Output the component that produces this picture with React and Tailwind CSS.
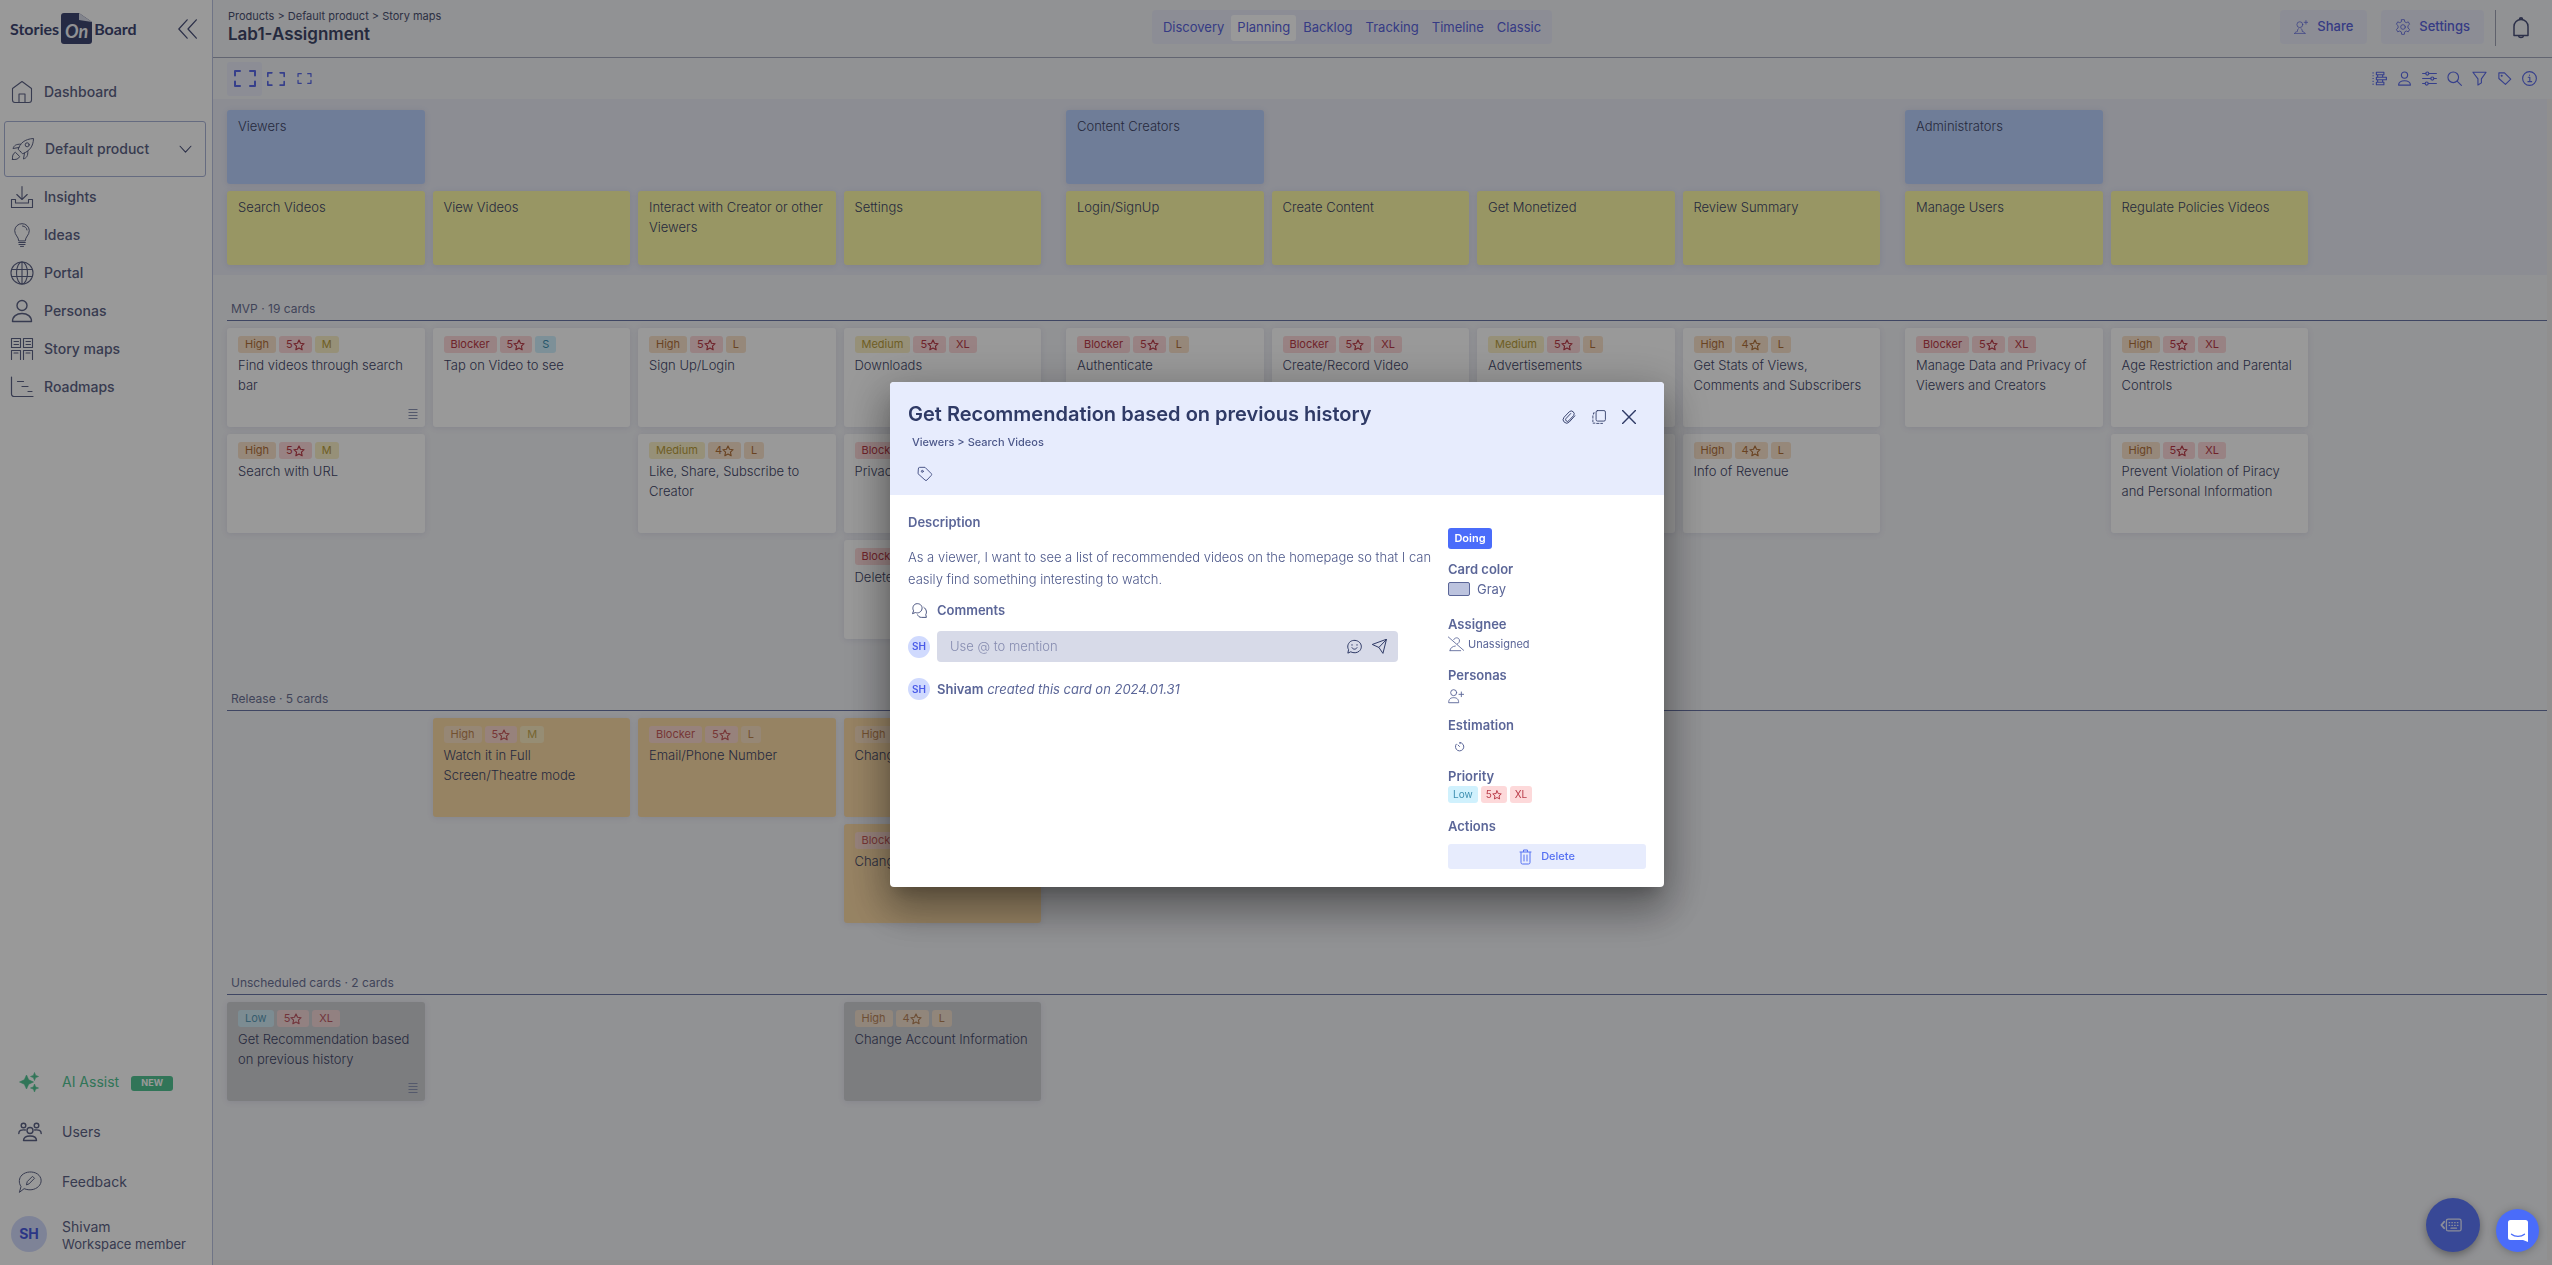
import React from "react";

function Icon({ size = 20, w, h, sw = 1.2, box = "0 0 24 24", className = "", children }) {
  return (
    <svg
      width={w || size}
      height={h || size}
      viewBox={box}
      fill="none"
      stroke="currentColor"
      strokeWidth={sw}
      strokeLinecap="round"
      strokeLinejoin="round"
      className={"shrink-0 " + className}
      aria-hidden="true"
    >
      {children}
    </svg>
  );
}

const HomeIcon = () => (
  <Icon size={24} sw={1.1}>
    <path d="M2.500 8.500 12 1.500l9.500 7V20a2.500 2.500 0 0 1-2.500 2.500H5A2.500 2.500 0 0 1 2.500 20z" />
    <path d="M9 22.500V14h6v8.500" />
  </Icon>
);
const RocketIcon = () => (
  <Icon size={24} sw={1}>
    <path d="M9.500 14.500c-1-.6-1.800-1.300-2.300-2.300C9 6.500 13.500 2 22.500 1.500 22.300 9.500 18.500 14 11.800 16.700c-1-.4-1.800-1.200-2.300-2.200z" />
    <circle cx="16.200" cy="7.800" r="2" />
    <path d="M8 10.500 2 11.500C3 8.500 5 7 9.800 7.200M13.500 16l-1 6c3-1 4.600-3 4.300-7.800" />
    <path d="M1.500 22.500c-.3-3.600.4-6 2.900-7.200l4.300 4.200c-1.200 2.600-3.500 3.300-7.200 3z" />
  </Icon>
);
const InsightsIcon = () => (
  <Icon size={24} sw={1.1}>
    <path d="M12 1.500v13M6.800 9.500l5.200 5 5.200-5" />
    <path d="M1.500 14.500h4v3.500h13v-3.500h4V22.500h-21z" />
  </Icon>
);
const IdeaIcon = () => (
  <Icon size={24} sw={1}>
    <path d="M8.700 17.500c0-3.800-4-5.200-4-10A7.200 7.200 0 0 1 12 .700a7.200 7.200 0 0 1 7.300 6.800c0 4.800-4 6.200-4 10z" />
    <path d="M12.500 3c2.500.2 4.200 1.800 4.500 4M8.700 19.500h6.600M9 21.500h6M10.500 23.400h3" />
  </Icon>
);
const GlobeIcon = () => (
  <Icon size={24} sw={1.1}>
    <circle cx="12" cy="12" r="11" />
    <ellipse cx="12" cy="12" rx="5.500" ry="11" />
    <path d="M1.800 8.500h20.400M1.800 15.500h20.400M12 1v22" />
  </Icon>
);
const PersonIcon = ({ size = 24, sw = 1.4 }) => (
  <Icon size={size} sw={sw}>
    <circle cx="12" cy="6.500" r="5" />
    <path d="M2.500 22.500c0-5 4-8 9.500-8s9.500 3 9.500 8z" />
  </Icon>
);
const MapsIcon = () => (
  <Icon size={24} sw={1.1}>
    <path d="M1.500 1.500h9v9h-9zM13.500 1.500h9v9h-9zM1.500 22.500v-9h9v9M13.500 22.500v-9h9v9" />
    <path d="M4 4.500h4.500M4 7.500h4.500M16 4.500h4.500M16 7.500h4.500M4 16h4M16 16h4" />
  </Icon>
);
const RoadmapIcon = () => (
  <Icon size={24} sw={1.200}>
    <path d="M1.500 2v17a2.500 2.500 0 0 0 2.500 2.500h19M7.500 6.500h6M12 11.500h6M18 16.500h4" />
  </Icon>
);
const SparkIcon = () => (
  <svg width="20" height="20" viewBox="0 0 20 20" fill="currentColor" className="shrink-0" aria-hidden="true">
    <path d="M7.500 3 9.700 7.800 14.500 10l-4.800 2.200L7.500 17l-2.200-4.800L.5 10l4.800-2.200zM15.500.5l1.100 2.900 2.900 1.100-2.900 1.100-1.100 2.900-1.100-2.900-2.900-1.100 2.900-1.100zM15.500 12l1.100 2.900 2.900 1.100-2.900 1.100-1.100 2.900-1.100-2.900-2.900-1.100 2.900-1.100z" stroke="currentColor" strokeWidth=".6" />
  </svg>
);
const UsersIcon = () => (
  <Icon size={24} sw={1.400}>
    <circle cx="12" cy="10.500" r="3" />
    <circle cx="5.500" cy="5.500" r="2.300" />
    <circle cx="18.500" cy="5.500" r="2.300" />
    <path d="M5.500 20.500c0-3 2.500-4.500 6.500-4.500s6.500 1.500 6.500 4.500zM.8 13.500c0-3 2.200-4 6.500-3.500M23.200 13.500c0-3-2.200-4-6.500-3.500" />
  </Icon>
);
const FeedbackIcon = () => (
  <Icon size={24} sw={1}>
    <path d="M1.500 22 3 16.500C.5 13 .8 8 4 5c4-3.700 11-4 15.500-1 4.500 3.200 4.800 9 1 12.500-3.600 3.400-9 4.300-14 2.300z" />
    <path d="m8.500 14.500.8-3 5.200-5.200 2 2-5.200 5.300z" />
  </Icon>
);

const NAV = [
  ["Insights", InsightsIcon],
  ["Ideas", IdeaIcon],
  ["Portal", GlobeIcon],
  ["Personas", PersonIcon],
  ["Story maps", MapsIcon],
  ["Roadmaps", RoadmapIcon],
];

function Logo() {
  return (
    <div className="flex h-[31px] items-center gap-[2px] font-['Liberation_Sans_Narrow',Lato,sans-serif] text-base font-bold text-[#3f4672]">
      <span>Stories</span>
      <span className="relative flex h-[31px] w-[31px] items-center justify-center rounded-[3px] bg-[#3f4672] pt-1 text-lg italic text-[#f2f3f8]">
        On
        <svg width="13" height="9" viewBox="0 0 13 9" className="absolute right-0 top-0" aria-hidden="true">
          <path d="M0 0h13v9z" fill="#fff" />
          <path d="M0 0v7l13 2z" fill="#d9dcea" />
        </svg>
      </span>
      <span>Board</span>
    </div>
  );
}

function Sidebar() {
  return (
    <aside className="flex w-[213px] shrink-0 flex-col border-r border-[#b9c2e0] bg-white text-[#5d6385]">
      <div className="flex h-[57px] items-center justify-between pl-[10px] pr-[14px]">
        <Logo />
        <button type="button" aria-label="Collapse sidebar" className="text-[#4a517a]">
          <Icon size={20} sw={1.500}>
            <path d="M11 1 1 12l10 11M22 1 12 12l10 11" />
          </Icon>
        </button>
      </div>
      <a href="#dashboard" className="mt-[17px] flex h-9 items-center gap-[10px] pl-[10px] text-sm font-medium">
        <HomeIcon />
        Dashboard
      </a>
      <button type="button" className="ml-1 mr-[6px] mt-[11px] flex h-14 items-center gap-[10px] rounded-[3px] border border-[#a9b3d6] pl-[6px] pr-[13px] text-sm font-medium">
        <RocketIcon />
        Default product
        <Icon size={13} sw={2} className="ml-auto text-[#4a517a]">
          <path d="m2 6 10 11L22 6" />
        </Icon>
      </button>
      <nav className="mt-px flex flex-col">
        {NAV.map(([label, Glyph]) => (
          <a key={label} href={"#" + label.replace(" ", "-")} className="flex h-[38px] items-center gap-[10px] pl-[10px] text-sm font-medium">
            <Glyph />
            {label}
          </a>
        ))}
      </nav>
      <div className="mt-auto flex flex-col pb-1">
        <a href="#assist" className="flex h-[50px] items-center pl-[19px] text-sm text-[#52c493]">
          <SparkIcon />
          <span className="ml-[23px]">AI Assist</span>
          <span className="ml-3 mt-[3px] flex h-[15px] w-[42px] items-center justify-center rounded-[3px] bg-[#52c493] text-[9px] font-bold text-white">NEW</span>
        </a>
        <a href="#users" className="flex h-[50px] items-center gap-[20px] pl-[18px] text-sm">
          <UsersIcon />
          Users
        </a>
        <a href="#feedback" className="flex h-[50px] items-center gap-[20px] pl-[18px] text-sm">
          <FeedbackIcon />
          Feedback
        </a>
        <div className="flex h-[54px] items-center gap-[15px] pl-[11px]">
          <span className="flex h-9 w-9 items-center justify-center rounded-full bg-[#d3dbfc] text-sm font-bold text-[#4a5be0]">SH</span>
          <span className="flex flex-col pt-px">
            <span className="text-sm leading-[18px]">Shivam</span>
            <span className="text-[13px] leading-4">Workspace member</span>
          </span>
        </div>
      </div>
    </aside>
  );
}

const TABS = ["Discovery", "Planning", "Backlog", "Tracking", "Timeline", "Classic"];

function Header() {
  return (
    <header className="flex h-[58px] shrink-0 items-start border-b border-[#a4a9bd] pt-[10px]">
      <div className="flex flex-1 flex-col pl-[7px] text-[#4a5070]">
        <span className="-mt-[2px] ml-2 text-[11px] leading-4">Products &gt; Default product &gt; Story maps</span>
        <h1 className="ml-2 text-[17px] font-semibold leading-5 text-[#3f4668]">Lab1-Assignment</h1>
      </div>
      <div className="flex h-[34px] items-start gap-px rounded-[4px] bg-[#e9ecf9] px-[5px] pt-[5px]">
        {TABS.map((t) => (
          <button
            key={t}
            type="button"
            className={
              "h-[26px] rounded-[3px] px-[6px] pb-[3px] text-[13px] leading-5 text-[#5a63dd] " + (t === "Planning" ? "bg-white" : "")
            }
          >
            {t}
          </button>
        ))}
      </div>
      <div className="flex flex-1 justify-end gap-[14px]">
        <button type="button" className="flex h-[34px] items-center gap-[9px] rounded-[4px] bg-[#e9ecf9] px-[14px] text-[13px] font-medium text-[#5a63dd]">
          <Icon size={14} sw={1.200}>
            <circle cx="10" cy="8" r="5" />
            <path d="M1 23c1-2 2-2.500 5-3.500v-3l2-1.500M19 23c-1-2-2-2.500-5-3.500v-3L12 15M1 23h18M20.500 1v6M17.500 4h6" />
          </Icon>
          Share
        </button>
        <button type="button" className="flex h-[34px] items-center gap-2 rounded-[4px] bg-[#e9ecf9] px-[14px] text-[13px] font-medium text-[#5a63dd]">
          <Icon size={16} sw={1.200}>
            <circle cx="12" cy="12" r="3.500" />
            <path d="M10 1h4l.6 3.200 2.300 1.300 3-1.200 2 3.500-2.500 2.200v3.500l2.500 2.200-2 3.500-3-1.200-2.300 1.300L14 23h-4l-.6-3.700-2.300-1.300-3 1.200-2-3.500 2.500-2.200v-3.500L2.100 7.800l2-3.500 3 1.200 2.300-1.300z" />
          </Icon>
          Settings
        </button>
      </div>
      <div className="flex w-[68px] shrink-0 items-center">
        <span className="ml-[11px] h-9 w-px bg-[#9ea2b5]" />
        <button type="button" aria-label="Notifications" className="ml-[17px] text-[#4a517a]">
          <Icon w={16} h={22} sw={1.500} box="0 0 16 22">
            <path d="M1 18.500V9.500a7 7 0 0 1 14 0v9zM6.500 2.300a1.500 1.500 0 0 1 3 0M5.500 18.800c.5 2.400 4.500 2.400 5 0" />
          </Icon>
        </button>
      </div>
    </header>
  );
}

function Corners({ w, h, sw }) {
  return (
    <Icon w={w} h={h} sw={sw} box="0 0 22 17">
      <path d="M1 5.500V1h5M16 1h5v4.500M21 11.500V16h-5M6 16H1v-4.500" />
    </Icon>
  );
}

const TOOLS = [
  ["Card list", <path key="a" d="M1.500 3h.5M1.500 12h.5M1.500 21h.5M1.500 7.500h.5M1.500 16.500h.5M7 2h12v4H7zM7 18h12v4H7zM7 10h16v4H7zM9 6v4M17 6v4M9 14v4M17 14v4" />],
  ["Personas", <g key="b"><circle cx="12" cy="6.500" r="5" /><path d="M2.500 22.500c0-4 4-7 9.500-7s9.500 3 9.500 7z" /></g>],
  ["Options", <g key="c"><path d="M1 4h5M11 4h12M1 12h13M19 12h4M1 20h4M10 20h13" /><circle cx="8.500" cy="4" r="2.500" /><circle cx="16.500" cy="12" r="2.500" /><circle cx="7.500" cy="20" r="2.500" /></g>],
  ["Search", <g key="d"><circle cx="10" cy="10" r="8.500" /><path d="m16.500 16.500 6.500 6.500" /></g>],
  ["Filter", <path key="e" d="M1.500 2h21L15 12.500V19l-5.500 3.500v-10z" />],
  ["Labels", <g key="f"><path d="M3 3h9l10 10-8.500 8.500L3 12z" /><circle cx="7.500" cy="7.500" r=".8" /></g>],
  ["Info", <g key="g"><circle cx="12" cy="12" r="11" /><path d="M10 10h2.500v7M9.500 17h6M12 6.300v.400" /></g>],
];

function Toolbar() {
  return (
    <div className="flex h-[41px] shrink-0 items-center pl-[14px] pr-[15px] text-[#5a6ae8]">
      <button type="button" aria-label="Large cards" className="flex h-[34px] w-[35px] items-center justify-center rounded-[3px] bg-[#e9ecf9]">
        <Corners w={22} h={17} sw={2} />
      </button>
      <button type="button" aria-label="Medium cards" className="ml-[5px]">
        <Corners w={18} h={14} sw={2} />
      </button>
      <button type="button" aria-label="Small cards" className="ml-3">
        <Corners w={15} h={11} sw={2} />
      </button>
      <div className="ml-auto flex gap-[10px]">
        {TOOLS.map(([label, art]) => (
          <button key={label} type="button" aria-label={label}>
            <Icon size={15} sw={1.800}>{art}</Icon>
          </button>
        ))}
      </div>
    </div>
  );
}

const TONES = {
  red: "bg-[#fdd9da] text-[#b93a47]",
  orange: "bg-[#fbe3cc] text-[#b0703a]",
  yellow: "bg-[#fbf0c8] text-[#b89d3c]",
  blue: "bg-[#d0f1fd] text-[#3e8fb0]",
};
const LABELS = {
  Blocker: "red", High: "orange", Medium: "yellow", Low: "blue",
  "5": "red", "4": "orange", XL: "red", L: "orange", M: "yellow", S: "blue",
};

function Badge({ label, small, faded }) {
  const star = label === "5" || label === "4";
  return (
    <span
      className={
        "flex h-[17px] items-center rounded-[3px] " +
        (small ? "px-[5px] text-[10px] " : "px-[7px] text-[11px] ") +
        (faded ? "opacity-80 " : "") +
        TONES[LABELS[label]]
      }
    >
      {label}
      {star && (
        <Icon size={small ? 10 : 12} sw={2.300}>
          <path d="m12 2 3 6.600 7.200.8-5.300 4.900 1.400 7.200L12 18l-6.300 3.500 1.400-7.200L1.800 9.400 9 8.600z" />
        </Icon>
      )}
    </span>
  );
}

const SHADOW = "shadow-[0_1px_6px_rgba(80,85,150,0.12)]";

function Card({ data }) {
  const [tags, title, tone, note] = data;
  const bg = tone === "amber" ? "bg-[#fbdaa6]" : tone === "gray" ? "bg-[#cfd0d4]" : "bg-white";
  return (
    <article className={"relative h-[99px] rounded-[3px] px-[11px] pt-2 " + bg + " " + SHADOW}>
      <div className="flex gap-[3px]">
        {tags.map((t) => (
          <Badge key={t} label={t} faded={Boolean(tone)} />
        ))}
      </div>
      <p className="mt-[2px] text-[13px] font-light leading-5 text-[#3f4668]">{title}</p>
      {note && (
        <Icon w={10} h={10} sw={1} box="0 0 10 10" className="absolute bottom-2 right-[7px] text-[#8d94b5]">
          <path d="M.5 .5h9M.5 3.500h9M.5 6.500h9M.5 9.500h9" strokeLinecap="butt" />
        </Icon>
      )}
    </article>
  );
}

function Groups({ cells, render }) {
  const parts = [cells.slice(0, 4), cells.slice(4, 8), cells.slice(8, 10)];
  return (
    <div className="flex gap-[25px] pl-[14px]">
      {parts.map((p, i) => (
        <div key={i} className={"grid items-start gap-x-2 " + (i === 2 ? "w-[403px] grid-cols-2" : "w-[814px] grid-cols-4")}>
          {p.map((c, j) => (
            <div key={j} className="min-w-0">{render(c)}</div>
          ))}
        </div>
      ))}
    </div>
  );
}

const ACTIVITIES = ["Viewers", "", "", "", "Content Creators", "", "", "", "Administrators", ""];
const STEPS = ["Search Videos", "View Videos", "Interact with Creator or other Viewers", "Settings", "Login/SignUp", "Create Content", "Get Monetized", "Review Summary", "Manage Users", "Regulate Policies Videos"];

const RELEASES = [
  {
    name: "MVP", count: 19,
    columns: [
      [[["High", "5", "M"], "Find videos through search bar", "", true], [["High", "5", "M"], "Search with URL"]],
      [[["Blocker", "5", "S"], "Tap on Video to see"]],
      [[["High", "5", "L"], "Sign Up/Login"], [["Medium", "4", "L"], "Like, Share, Subscribe to Creator"]],
      [[["Medium", "5", "XL"], "Downloads"], [["Blocker"], "Privacy"], [["Blocker"], "Delete"]],
      [[["Blocker", "5", "L"], "Authenticate"]],
      [[["Blocker", "5", "XL"], "Create/Record Video"]],
      [[["Medium", "5", "L"], "Advertisements"], [[], ""]],
      [[["High", "4", "L"], "Get Stats of Views, Comments and Subscribers"], [["High", "4", "L"], "Info of Revenue"]],
      [[["Blocker", "5", "XL"], "Manage Data and Privacy of Viewers and Creators"]],
      [[["High", "5", "XL"], "Age Restriction and Parental Controls"], [["High", "5", "XL"], "Prevent Violation of Piracy and Personal Information"]],
    ],
  },
  {
    name: "Release", count: 5,
    columns: [
      [],
      [[["High", "5", "M"], "Watch it in Full Screen/Theatre mode", "amber"]],
      [[["Blocker", "5", "L"], "Email/Phone Number", "amber"]],
      [[["High"], "Change", "amber"], [["Blocker"], "Change", "amber"]],
      [], [], [], [], [], [],
    ],
  },
  {
    name: "Unscheduled cards", count: 2,
    columns: [
      [[["Low", "5", "XL"], "Get Recommendation based on previous history", "gray", true]],
      [], [],
      [[["High", "4", "L"], "Change Account Information", "gray"]],
      [], [], [], [], [], [],
    ],
  },
];

function Board() {
  return (
    <main className="flex flex-1 flex-col border-b-[5px] border-r-[5px] border-[#f1efee]">
      <div className="flex flex-col gap-[7px] bg-[#e9ebf6] pb-[10px] pt-[11px]">
        <Groups
          cells={ACTIVITIES}
          render={(t) => t && <div className={"h-[74px] rounded-[3px] bg-[#bad1fd] px-[11px] pt-[6px] text-[13px] font-light leading-5 text-[#3f4668] " + SHADOW}>{t}</div>}
        />
        <Groups
          cells={STEPS}
          render={(t) => <div className={"h-[74px] rounded-[3px] bg-[#fdfba7] px-[11px] pt-[6px] text-[13px] font-light leading-5 text-[#3f4668] " + SHADOW}>{t}</div>}
        />
      </div>
      {RELEASES.map((r) => (
        <section key={r.name} className="pb-[26px] pt-[26px]">
          <h2 className="mb-[7px] ml-[14px] border-b border-[#6a75a6] pb-[3px] pl-1 text-xs font-normal leading-4 text-[#6c7295]">
            {r.name} · {r.count} cards
          </h2>
          <Groups
            cells={r.columns}
            render={(cards) => (
              <div className="flex flex-col gap-[7px]">
                {cards.map((c, i) => (
                  <Card key={i} data={c} />
                ))}
              </div>
            )}
          />
        </section>
      ))}
    </main>
  );
}

function Avatar() {
  return <span className="flex h-[22px] w-[22px] shrink-0 items-center justify-center rounded-full bg-[#d0dafe] text-[10px] font-semibold text-[#4a5be8]">SH</span>;
}

function Field({ label, height, children }) {
  return (
    <div className={height}>
      <h3 className="text-[13px] font-semibold leading-5">{label}</h3>
      {children}
    </div>
  );
}

function Dialog() {
  return (
    <div role="dialog" aria-labelledby="card-title" className="w-[774px] overflow-hidden rounded-[4px] bg-white text-[#5b6698] shadow-[0_11px_15px_-7px_rgba(0,0,0,0.2),0_24px_38px_3px_rgba(0,0,0,0.24),0_9px_46px_8px_rgba(0,0,0,0.2)]">
      <div className="flex h-[113px] justify-between bg-[#e7ecfd] pl-[18px] pr-[28px] text-[#2f3a66]">
        <div>
          <h2 id="card-title" className="mt-5 text-xl font-semibold leading-6">Get Recommendation based on previous history</h2>
          <p className="ml-1 mt-2 text-[11px] font-medium leading-4 text-[#4d588a]">Viewers &gt; Search Videos</p>
          <button type="button" aria-label="Add label" className="ml-[9px] mt-4 block text-[#4d588a]">
            <Icon size={16} sw={1.500}>
              <path d="M2 4A2 2 0 0 1 4 2h8l9.500 9.500a2 2 0 0 1 0 2.500L15 21a2 2 0 0 1-3 0L2 12z" />
              <circle cx="8" cy="8" r="1.500" />
            </Icon>
          </button>
        </div>
        <div className="mt-[27px] flex h-4 items-center gap-4">
          <button type="button" aria-label="Attach file">
            <Icon size={14} sw={1.600}>
              <path d="m22 10-9.500 10.500a6 6 0 0 1-9-8L12.500 3a5 5 0 0 1 7.500 6.500l-8.500 9a3 3 0 0 1-4.500-4l8-8.500" />
            </Icon>
          </button>
          <button type="button" aria-label="Copy card">
            <Icon size={14} sw={1.500}>
              <rect x="7" y="1" width="16" height="18" rx="2.500" />
              <path d="M4 5H2.500v2M1.500 10v4M1.500 17v3M2 22.500h3M8 23h4M15 23h3" />
            </Icon>
          </button>
          <button type="button" aria-label="Close">
            <Icon size={14} sw={2.400}>
              <path d="m1 1 22 22M23 1 1 23" />
            </Icon>
          </button>
        </div>
      </div>
      <div className="flex justify-between pb-[18px] pl-[18px] pr-[18px]">
        <div className="w-[532px] pt-[17px]">
          <h3 className="text-[13px] font-semibold leading-5">Description</h3>
          <p className="mt-[14px] text-[13px] font-light leading-[22px] text-[#4d588a]">
            As a viewer, I want to see a list of recommended videos on the homepage so that I can easily find something interesting to watch.
          </p>
          <div className="mt-[10px] flex items-center gap-[10px] pl-1">
            <Icon size={15} sw={1.500} className="text-[#3f4a78]">
              <path d="M1 16.500 2.500 12.500C0 8 2 2.500 6.500 1.300 12 0 17 4 16 9.500c-1 5-6 7.500-10 6z" />
              <path d="M19 7c4.500 3 5 8.500 3 11.500l1 4.500h-8c-3 0-5-1.500-6-4" />
            </Icon>
            <h3 className="text-[13px] font-semibold leading-5">Comments</h3>
          </div>
          <div className="mt-[11px] flex items-center gap-[7px]">
            <Avatar />
            <div className="flex h-[31px] w-[461px] items-center rounded-[4px] bg-[#d7dae8] pl-[13px] pr-[11px] text-[#2f3a66]">
              <input aria-label="Comment" placeholder="Use @ to mention" className="min-w-0 flex-1 bg-transparent text-[13px] font-light placeholder-[#868cb0] outline-none" />
              <button type="button" aria-label="Add emoji">
                <Icon size={15} sw={1.600}>
                  <path d="M1.500 22 2.500 17C-.5 12 2 5.500 7 3.200c5-2.200 11-.7 14 3.300s2.500 9.500-1.500 13c-3.500 3-9 3.300-13 1.300z" />
                  <path d="M8 9v1M16 9v1M8 14c2 3.200 6 3.200 8 0" />
                </Icon>
              </button>
              <button type="button" aria-label="Send" className="ml-[10px]">
                <Icon size={15} sw={1.600}>
                  <path d="M23 1 17.500 23 11 13.500 1 9zM23 1 11 13.500" />
                </Icon>
              </button>
            </div>
          </div>
          <div className="mt-[16px] flex items-center gap-[7px]">
            <Avatar />
            <p className="text-[13px] leading-5">
              <strong className="font-semibold">Shivam</strong> <em>created this card on 2024.01.31</em>
            </p>
          </div>
        </div>
        <div className="w-[198px] pt-[33px]">
          <button type="button" className="flex h-[21px] w-11 items-center justify-center rounded-[3px] bg-[#4a6cfa] pb-px text-[11px] font-semibold text-white">Doing</button>
          <div className="mt-[10px]">
            <Field label="Card color" height="h-[55px]">
              <div className="flex items-center gap-[7px]">
                <span className="h-[14px] w-[22px] rounded-[2px] border border-[#5b6698] bg-[#bcc3de]" />
                <span className="text-[13px] leading-5">Gray</span>
              </div>
            </Field>
            <Field label="Assignee" height="h-[51px]">
              <div className="flex items-center gap-1">
                <Icon size={16} sw={1.300}>
                  <path d="M8.500 5.500C10 2 15.500 1.500 17 5.500c1 3-1 5.500-3 6.500M3 22c0-4 3.500-6.500 8-7M3 22h16M.5 1.500l23 20" />
                </Icon>
                <span className="text-[11px] leading-5">Unassigned</span>
              </div>
            </Field>
            <Field label="Personas" height="h-[50px]">
              <button type="button" aria-label="Add persona" className="mt-[3px] block">
                <Icon size={16} sw={1.400}>
                  <circle cx="8.500" cy="7" r="4.500" />
                  <path d="M1 21.500c0-5 3-7 7.500-7s7.500 2 7.500 7zM20 6v7M16.500 9.500h7" />
                </Icon>
              </button>
            </Field>
            <Field label="Estimation" height="h-[51px]">
              <button type="button" aria-label="Set estimation" className="ml-[6px] mt-[6px] block">
                <Icon size={11} sw={1} box="0 0 11 11">
                  <path d="M6 1.500A4.200 4.200 0 1 1 2.200 3.200M6 1.500v1.200M4 4l1.500 1.500" />
                </Icon>
              </button>
            </Field>
            <Field label="Priority" height="h-[50px]">
              <div className="flex gap-[3px]">
                <Badge label="Low" small />
                <Badge label="5" small />
                <Badge label="XL" small />
              </div>
            </Field>
            <Field label="Actions" height="">
              <button type="button" className="mt-2 flex h-[25px] w-full items-center justify-center gap-[9px] rounded-[3px] bg-[#e7ecfd] text-[11px] font-medium text-[#5570f2]">
                <Icon w={13} h={16} sw={1} box="0 0 13 16">
                  <path d="M1 3h11M4.500 2.500V1h4v1.500M2 3.500v10A1.500 1.500 0 0 0 3.500 15h6a1.500 1.500 0 0 0 1.500-1.500v-10M5 6v6M8 6v6" />
                </Icon>
                Delete
              </button>
            </Field>
          </div>
        </div>
      </div>
    </div>
  );
}

export default function App() {
  return (
    <div className="flex min-h-screen bg-[#f2f3f7] font-[Inter,sans-serif]">
      <Sidebar />
      <div className="flex min-w-0 flex-1 flex-col">
        <Header />
        <Toolbar />
        <Board />
      </div>
      <button type="button" aria-label="Keyboard shortcuts" className="fixed bottom-[13px] right-[72px] flex h-[54px] w-[54px] items-center justify-center rounded-full bg-[#5e79fb] pr-1 text-[#e9ecff] shadow-[0_3px_8px_rgba(0,0,0,0.35)]">
        <Icon w={22} h={14} sw={1.400} box="0 0 24 15">
          <path d="m4.500 4-3 3.500 3 3.500" strokeWidth="2" />
          <rect x="7" y="1" width="16" height="13" rx="2" />
          <path d="M10 5h.5M13 5h.5M16 5h.5M19 5h.5M10 8h.5M13 8h.5M16 8h.5M19 8h.5M12 11h6" />
        </Icon>
      </button>
      <div className="fixed inset-0 flex items-center justify-center bg-black/40 pl-[2px] pt-1">
        <Dialog />
      </div>
      <button type="button" aria-label="Open chat" className="fixed bottom-[13px] right-[13px] flex h-[43px] w-[43px] items-center justify-center rounded-full bg-[#4a6cfa] shadow-[0_1px_8px_rgba(0,0,0,0.25)]">
        <svg width="20" height="22" viewBox="0 0 20 22" aria-hidden="true">
          <path d="M2.500 0h15A2.500 2.500 0 0 1 20 2.500V22l-5-2H2.500A2.500 2.500 0 0 1 0 17.500v-15A2.500 2.500 0 0 1 2.500 0z" fill="#fff" />
          <path d="M3.500 14.200c3.500 3 9.500 3 13 0" fill="none" stroke="#4a6cfa" strokeWidth="1.300" strokeLinecap="round" />
        </svg>
      </button>
    </div>
  );
}
